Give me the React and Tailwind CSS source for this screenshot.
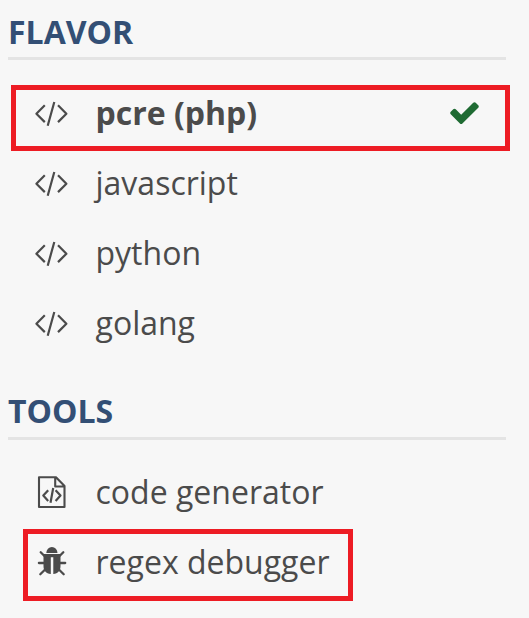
function CodeIcon() {
  return (
    <svg className="block h-[30px] w-9" viewBox="-0.4 0 36 30" fill="none" stroke="#4b4b4b" strokeWidth="2.2" strokeLinejoin="round">
      <path d="M11.4 6.3 3 14.7l8.4 8.4M24.6 6.3l8.4 8.4-8.4 8.4M20.9 3 14.3 26.7" />
    </svg>
  );
}

function FileCodeIcon() {
  return (
    <svg className="block h-9 w-9" viewBox="-0.5 0 36 36" fill="none" stroke="#4b4b4b" strokeWidth="2.1" strokeLinejoin="round">
      <path d="M5.5 2.2H22.5L31 11V32H5.5Z M21.7 2.2V11.5H31" />
      <path d="M14.7 15.2 9.8 20.5l4.9 5.4M22.1 15.2l4.9 5.3-4.9 5.4M19.7 13 17 27.8" strokeWidth="2.2" />
    </svg>
  );
}

function BugIcon() {
  return (
    <svg className="block h-9 w-9" viewBox="-0.7 0 36 36" fill="#4b4b4b">
      <path d="M12.6 7.9a5.6 5.9 0 0 1 11.2 0Z" />
      <path d="M9.8 9h17v12c0 4.6-2.4 7.6-7.2 7.9V12.3h-2.5v16.6c-4.9-.3-7.3-3.3-7.3-7.9Z" />
      <path d="M7 7.2l4 4M29.6 7.2l-4 4M5.2 18h6M31.5 18h-6M11.4 24.5l-4.8 4.8M25.2 24.5l4.8 4.8" stroke="#4b4b4b" strokeWidth="2.3" strokeLinecap="round" />
    </svg>
  );
}

function CheckIcon() {
  return (
    <svg className="block h-[33px] w-[33px]" viewBox="0 0 1792 1792" fill="#1f6b33">
      <path d="M1671 566q0 40-28 68l-724 724-136 136q-28 28-68 28t-68-28l-136-136-362-362q-28-28-28-68t28-68l136-136q28-28 68-28t68 28l294 295 656-657q28-28 68-28t68 28l136 136q28 28 28 68z" />
    </svg>
  );
}

function Heading({ children }) {
  return (
    <h2 className="border-b-[3px] border-[#e4e4e4] text-[32px] leading-[44px] font-bold text-[#334f75]">
      {children}
    </h2>
  );
}

function Row({ icon, label, active, boxed }) {
  return (
    <li className="relative flex h-[70px] items-center gap-[26.5px] pr-12 pl-[33px]">
      {icon}
      <span className={active ? "grow pb-0.5 text-[32px] leading-[44px] font-bold" : "grow pb-0.5 text-[32px] leading-[44px]"}>
        {label}
      </span>
      {active && (
        <span className="pb-[3px]">
          <CheckIcon />
        </span>
      )}
      {active && <span className="absolute top-[6px] left-[11px] h-[66px] w-[499px] border-5 border-[#ed1c24]" />}
      {boxed && <span className="absolute top-px left-[23px] h-[72px] w-[330px] border-5 border-[#ed1c24]" />}
    </li>
  );
}

export default function App() {
  return (
    <aside className="flex h-[618px] w-[529px] flex-col overflow-hidden bg-[#f7f7f7] font-['Open_Sans',sans-serif] whitespace-nowrap text-[#4b4b4b]">
      <div className="pt-[10px] pr-[23px] pl-2 [&>h2]:h-[50px]">
        <Heading>FLAVOR</Heading>
      </div>
      <ul className="pt-[19px]">
        <Row icon={<CodeIcon />} label="pcre (php)" active />
        <Row icon={<CodeIcon />} label="javascript" />
        <Row icon={<CodeIcon />} label="python" />
        <Row icon={<CodeIcon />} label="golang" />
      </ul>
      <div className="pt-[30px] pr-[23px] pl-2 [&>h2]:h-[51px]">
        <Heading>TOOLS</Heading>
      </div>
      <ul className="pt-[18px]">
        <Row icon={<FileCodeIcon />} label="code generator" />
        <Row icon={<BugIcon />} label="regex debugger" boxed />
      </ul>
    </aside>
  );
}
